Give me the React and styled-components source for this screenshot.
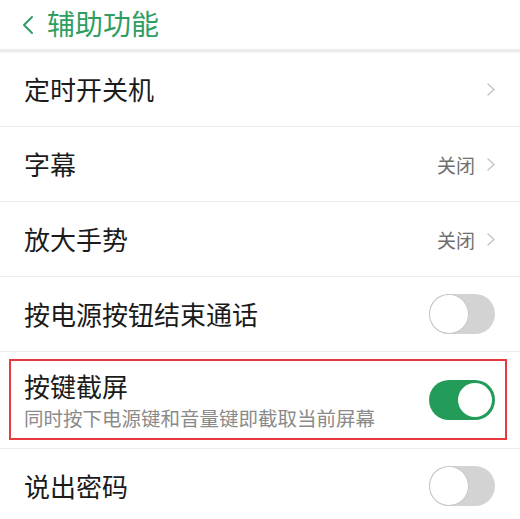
import styled, { createGlobalStyle } from "styled-components";

const GlobalStyle = createGlobalStyle`
  html, body {
    margin: 0;
    padding: 0;
    background: #ffffff;
  }
  body {
    font-family: "Noto Sans CJK SC", "Noto Sans", sans-serif;
    overflow: hidden;
  }
`;

const Page = styled.div`
  width: 520px;
  height: 519px;
  overflow: hidden;
  background: #fff;
`;

const Header = styled.header`
  height: 49px;
  display: flex;
  align-items: center;
  gap: 13px;
  padding-left: 22px;
  border-bottom: 3px solid #ececec;
  box-shadow: 0 1px 2px rgba(0, 0, 0, 0.04);
`;

const HeaderTitle = styled.h1`
  margin: 0;
  font-size: 28px;
  font-weight: 400;
  color: #2f9e60;
  line-height: 1;
  padding-bottom: 4px;
`;

const List = styled.div`
  display: flex;
  flex-direction: column;
`;

const Row = styled.div`
  display: flex;
  align-items: center;
  justify-content: space-between;
  height: ${({ $tall }) => ($tall ? "97px" : "75px")};
  padding: ${({ $tall }) => ($tall ? "7px 13px 8px 9px" : "0 25px 0 24px")};
  border-bottom: 1px solid #ececec;
  box-sizing: border-box;
  flex-shrink: 0;
`;

const Highlight = styled.div`
  flex: 1;
  align-self: stretch;
  display: flex;
  align-items: center;
  justify-content: space-between;
  border: 2px solid #e63a3f;
  padding: 0 10px 0 13px;
`;

const Texts = styled.div`
  display: flex;
  flex-direction: column;
  gap: 4px;
`;

const Label = styled.span`
  font-size: 26px;
  color: #1b1b1b;
  line-height: 32px;
`;

const Sub = styled.span`
  font-size: 19.5px;
  color: #8a8a8a;
  line-height: 24px;
`;

const Trailing = styled.div`
  display: flex;
  align-items: center;
  gap: 12px;
`;

const Value = styled.span`
  font-size: 19px;
  color: #6f6f6f;
`;

const Toggle = styled.div`
  position: relative;
  width: 66px;
  height: 40px;
  border-radius: 20px;
  background: ${({ $on }) => ($on ? "#229c58" : "#d3d3d3")};
  flex-shrink: 0;

  &::after {
    content: "";
    position: absolute;
    top: ${({ $on }) => ($on ? "3px" : "1px")};
    left: ${({ $on }) => ($on ? "29px" : "1px")};
    width: ${({ $on }) => ($on ? "34px" : "38px")};
    height: ${({ $on }) => ($on ? "34px" : "38px")};
    border-radius: 50%;
    background: #fff;
    box-shadow: ${({ $on }) => ($on ? "none" : "0 0 0 1px #c8c8c8")};
  }
`;

const Chevron = ({ color = "#c4c4c4", w = 8, h = 13, sw = 1.4 }) => (
  <svg width={w} height={h} viewBox={`0 0 ${w} ${h}`} fill="none">
    <polyline
      points={`1,1 ${w - 1},${h / 2} 1,${h - 1}`}
      stroke={color}
      strokeWidth={sw}
      strokeLinecap="round"
      strokeLinejoin="round"
    />
  </svg>
);

const BackArrow = () => (
  <svg width="12" height="20" viewBox="0 0 12 20" fill="none">
    <polyline
      points="10,2 2,10 10,18"
      stroke="#2f9e60"
      strokeWidth="2"
      strokeLinecap="round"
      strokeLinejoin="round"
    />
  </svg>
);

const items = [
  { label: "定时开关机", type: "link" },
  { label: "字幕", type: "link", value: "关闭" },
  { label: "放大手势", type: "link", value: "关闭" },
  { label: "按电源按钮结束通话", type: "toggle", on: false },
  {
    label: "按键截屏",
    sub: "同时按下电源键和音量键即截取当前屏幕",
    type: "toggle",
    on: true,
    marked: true,
  },
  { label: "说出密码", type: "toggle", on: false },
];

function Trail({ item }) {
  if (item.type === "toggle") return <Toggle $on={item.on} />;
  return (
    <Trailing>
      {item.value && <Value>{item.value}</Value>}
      <Chevron />
    </Trailing>
  );
}

export default function App() {
  return (
    <Page>
      <GlobalStyle />
      <Header>
        <BackArrow />
        <HeaderTitle>辅助功能</HeaderTitle>
      </Header>
      <List>
        {items.map((item) =>
          item.marked ? (
            <Row key={item.label} $tall>
              <Highlight>
                <Texts>
                  <Label>{item.label}</Label>
                  <Sub>{item.sub}</Sub>
                </Texts>
                <Trail item={item} />
              </Highlight>
            </Row>
          ) : (
            <Row key={item.label}>
              <Label>{item.label}</Label>
              <Trail item={item} />
            </Row>
          )
        )}
      </List>
    </Page>
  );
}
